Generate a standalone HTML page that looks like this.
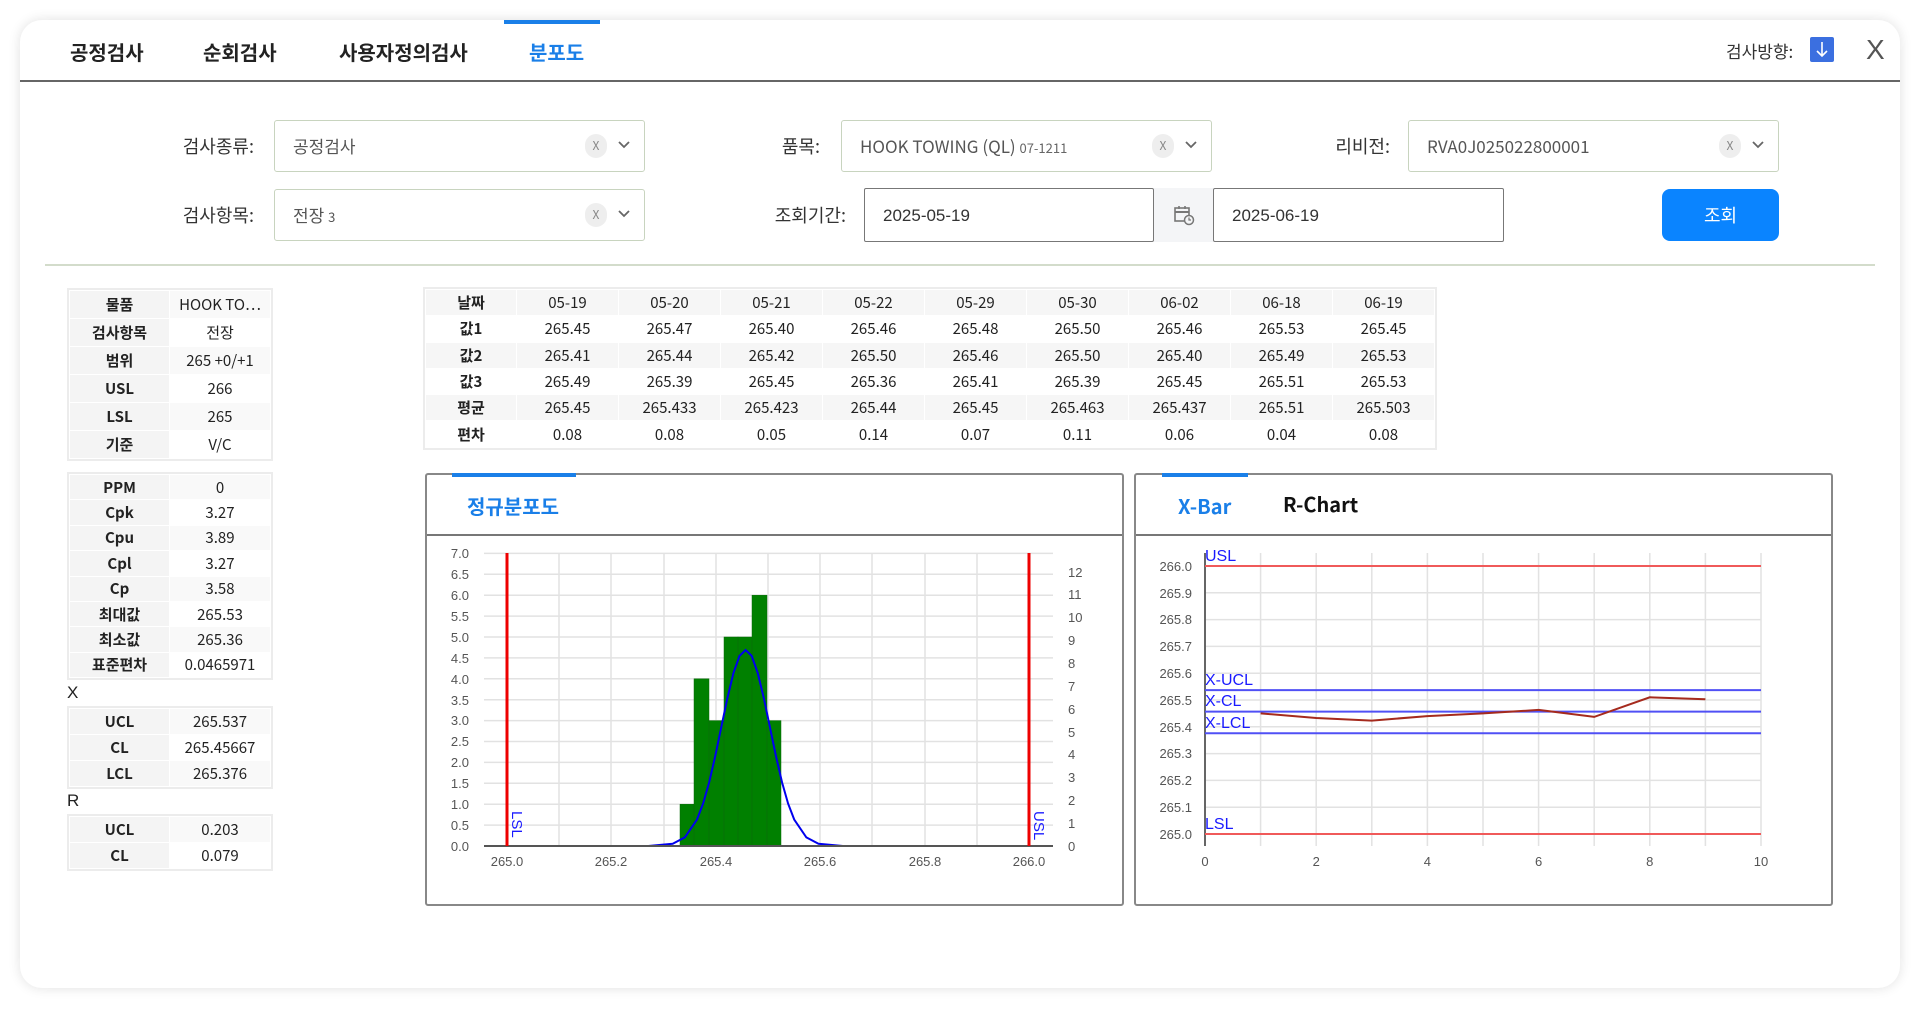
<!DOCTYPE html>
<html><head><meta charset="utf-8">
<style>
*{box-sizing:border-box;margin:0;padding:0}
body{width:1920px;height:1009px;background:#fff;font-family:"Liberation Sans","Noto Sans CJK KR",sans-serif;color:#222;position:relative;overflow:hidden}
.card{position:absolute;left:20px;top:20px;width:1880px;height:968px;background:#fff;border-radius:22px;box-shadow:0 0 12px rgba(0,0,0,.12)}
.abs{position:absolute}
.tab{position:absolute;top:37px;font-size:20px;font-weight:bold;font-family:"Noto Sans CJK KR",sans-serif;color:#222}
.lbl{position:absolute;font-size:18px;font-family:"Noto Sans CJK KR",sans-serif;color:#333;text-align:right}
.sel{position:absolute;height:52px;border:1.5px solid #c8d4bf;border-radius:3px;background:#fff;font-size:17px;color:#555;padding:0 18px;line-height:50px;font-family:"Noto Sans CJK KR",sans-serif}
.sel .x{position:absolute;top:13px;width:22px;height:24px;border-radius:11px;background:#eee;color:#888;font-size:12px;line-height:24px;text-align:center}
.sel svg{position:absolute;left:343px;top:20px}
.inp{position:absolute;height:54px;border:1.5px solid #777;border-radius:2px;background:#fff;font-size:17px;color:#333;padding:0 18px;line-height:54px}
table{border-collapse:collapse;font-size:15px;font-family:"Noto Sans CJK KR",sans-serif}
td{text-align:center;border:1px solid #fff;padding:0}
.lt{position:absolute;left:69px;width:202px;background:#f4f4f4;outline:2px solid #ececec}
.lt td:first-child{font-weight:bold;width:100px;background:#f4f4f4}
.lt tr:nth-child(odd) td:last-child{background:#f9f9f9}
.lt tr:nth-child(even) td:last-child{background:#fff}
.dt{position:absolute;left:425px;top:289px;width:1010px;outline:2px solid #ececec;table-layout:fixed}
.dt td{height:26.3px}
.dt tr:nth-child(odd) td{background:#f6f6f6}
.dt tr:nth-child(even) td{background:#fff}
.dt td:first-child{font-weight:bold;background:#f4f4f4}
.panel{position:absolute;top:473px;height:433px;border:2px solid #888;border-radius:3px;background:#fff}
.panel .hd{position:absolute;left:0;right:0;top:0;height:61px;border-bottom:2px solid #777}
.ind{position:absolute;top:-2px;height:4px;background:#1a7fe8}
</style></head><body>
<div class="card"></div>
<div class="tab" style="left:70px">공정검사</div>
<div class="tab" style="left:203px">순회검사</div>
<div class="tab" style="left:339px">사용자정의검사</div>
<div class="tab" style="left:529px;color:#1a7fe8">분포도</div>
<div class="abs" style="left:504px;top:20px;width:96px;height:4px;background:#1a7fe8"></div>
<div class="abs" style="left:20px;top:80px;width:1880px;height:2px;background:#666"></div>
<div class="abs" style="left:1726px;top:38px;font-size:17px;font-family:'Noto Sans CJK KR',sans-serif;color:#333">검사방향:</div>
<div class="abs" style="left:1810px;top:37px;width:24px;height:25px;background:#3b6fe0;border-radius:2px"><svg width="24" height="25" viewBox="0 0 24 25"><path d="M12 5V19M7 14l5 5 5-5" fill="none" stroke="#fff" stroke-width="1.6"/></svg></div>
<div class="abs" style="left:1866px;top:34px;font-size:28px;color:#555">X</div>
<div class="lbl" style="left:150px;width:104px;top:133px">검사종류:</div>
<div class="sel" style="left:274px;top:120px;width:371px">공정검사<span class="x" style="left:310px">X</span><svg width="12" height="8"><path d="M1 1l5 5 5-5" fill="none" stroke="#666" stroke-width="1.8"/></svg></div>
<div class="lbl" style="left:740px;width:80px;top:133px">품목:</div>
<div class="sel" style="left:841px;top:120px;width:371px">HOOK TOWING (QL) <span style="font-size:13px;color:#666">07-1211</span><span class="x" style="left:310px">X</span><svg width="12" height="8"><path d="M1 1l5 5 5-5" fill="none" stroke="#666" stroke-width="1.8"/></svg></div>
<div class="lbl" style="left:1300px;width:90px;top:133px">리비전:</div>
<div class="sel" style="left:1408px;top:120px;width:371px">RVA0J025022800001<span class="x" style="left:310px">X</span><svg width="12" height="8"><path d="M1 1l5 5 5-5" fill="none" stroke="#666" stroke-width="1.8"/></svg></div>
<div class="lbl" style="left:150px;width:104px;top:202px">검사항목:</div>
<div class="sel" style="left:274px;top:189px;width:371px">전장 <span style="font-size:13px">3</span><span class="x" style="left:310px">X</span><svg width="12" height="8"><path d="M1 1l5 5 5-5" fill="none" stroke="#666" stroke-width="1.8"/></svg></div>
<div class="lbl" style="left:740px;width:106px;top:202px">조회기간:</div>
<div class="inp" style="left:864px;top:188px;width:290px">2025-05-19</div>
<div class="abs" style="left:1154px;top:188px;width:59px;height:54px;background:#f4f5f7;text-align:center;line-height:54px">
<svg width="22" height="22" viewBox="0 0 22 22" style="vertical-align:middle"><rect x="2" y="4" width="14" height="13" fill="none" stroke="#777" stroke-width="1.6"/><line x1="2" y1="8" x2="16" y2="8" stroke="#777" stroke-width="2"/><line x1="6" y1="2" x2="6" y2="5" stroke="#777" stroke-width="1.6"/><line x1="12" y1="2" x2="12" y2="5" stroke="#777" stroke-width="1.6"/><circle cx="16" cy="16" r="4.5" fill="#f4f5f7" stroke="#777" stroke-width="1.5"/><path d="M16 13.5V16h2" fill="none" stroke="#777" stroke-width="1.2"/></svg></div>
<div class="inp" style="left:1213px;top:188px;width:291px">2025-06-19</div>
<div class="abs" style="left:1662px;top:189px;width:117px;height:52px;background:#0a84ff;border-radius:8px;color:#fff;text-align:center;line-height:52px;font-size:18px;font-family:'Noto Sans CJK KR',sans-serif">조회</div>
<div class="abs" style="left:45px;top:264px;width:1830px;height:2px;background:#d3dccb"></div>
<table class="lt" style="top:290px"><tbody>
<tr style="height:28px"><td>물품</td><td>HOOK TO…</td></tr>
<tr style="height:28px"><td>검사항목</td><td>전장</td></tr>
<tr style="height:28px"><td>범위</td><td>265 +0/+1</td></tr>
<tr style="height:28px"><td>USL</td><td>266</td></tr>
<tr style="height:28px"><td>LSL</td><td>265</td></tr>
<tr style="height:28px"><td>기준</td><td>V/C</td></tr>
</tbody></table>
<table class="lt" style="top:474px"><tbody>
<tr style="height:25.4px"><td>PPM</td><td>0</td></tr>
<tr style="height:25.4px"><td>Cpk</td><td>3.27</td></tr>
<tr style="height:25.4px"><td>Cpu</td><td>3.89</td></tr>
<tr style="height:25.4px"><td>Cpl</td><td>3.27</td></tr>
<tr style="height:25.4px"><td>Cp</td><td>3.58</td></tr>
<tr style="height:25.4px"><td>최대값</td><td>265.53</td></tr>
<tr style="height:25.4px"><td>최소값</td><td>265.36</td></tr>
<tr style="height:25.4px"><td>표준편차</td><td>0.0465971</td></tr>
</tbody></table>
<div class="abs" style="left:67px;top:683px;font-size:17px">X</div>
<table class="lt" style="top:708px"><tbody>
<tr style="height:26px"><td>UCL</td><td>265.537</td></tr>
<tr style="height:26px"><td>CL</td><td>265.45667</td></tr>
<tr style="height:26px"><td>LCL</td><td>265.376</td></tr>
</tbody></table>
<div class="abs" style="left:67px;top:791px;font-size:17px">R</div>
<table class="lt" style="top:816px"><tbody>
<tr style="height:26px"><td>UCL</td><td>0.203</td></tr>
<tr style="height:26px"><td>CL</td><td>0.079</td></tr>
</tbody></table>
<table class="dt"><colgroup><col style="width:91px"><col><col><col><col><col><col><col><col><col></colgroup><tbody>
<tr><td>날짜</td><td>05-19</td><td>05-20</td><td>05-21</td><td>05-22</td><td>05-29</td><td>05-30</td><td>06-02</td><td>06-18</td><td>06-19</td></tr>
<tr><td>값1</td><td>265.45</td><td>265.47</td><td>265.40</td><td>265.46</td><td>265.48</td><td>265.50</td><td>265.46</td><td>265.53</td><td>265.45</td></tr>
<tr><td>값2</td><td>265.41</td><td>265.44</td><td>265.42</td><td>265.50</td><td>265.46</td><td>265.50</td><td>265.40</td><td>265.49</td><td>265.53</td></tr>
<tr><td>값3</td><td>265.49</td><td>265.39</td><td>265.45</td><td>265.36</td><td>265.41</td><td>265.39</td><td>265.45</td><td>265.51</td><td>265.53</td></tr>
<tr><td>평균</td><td>265.45</td><td>265.433</td><td>265.423</td><td>265.44</td><td>265.45</td><td>265.463</td><td>265.437</td><td>265.51</td><td>265.503</td></tr>
<tr><td>편차</td><td>0.08</td><td>0.08</td><td>0.05</td><td>0.14</td><td>0.07</td><td>0.11</td><td>0.06</td><td>0.04</td><td>0.08</td></tr>
</tbody></table>
<div class="panel" style="left:425px;width:699px"><div class="hd"></div><div class="ind" style="left:25px;width:124px"></div>
<div class="abs" style="left:40px;top:16px;font-size:20px;font-weight:bold;color:#1a7fe8;font-family:'Noto Sans CJK KR',sans-serif">정규분포도</div></div>
<div class="panel" style="left:1134px;width:699px"><div class="hd"></div><div class="ind" style="left:26px;width:86px"></div>
<div class="abs" style="left:42px;top:16px;font-size:20px;font-weight:bold;color:#1a7fe8;font-family:'Noto Sans CJK KR',sans-serif">X-Bar</div>
<div class="abs" style="left:147px;top:14px;font-size:20px;font-weight:bold;color:#111;font-family:'Noto Sans CJK KR',sans-serif">R-Chart</div></div>

<svg class="abs" style="left:0;top:0" width="1920" height="1009" font-family="Liberation Sans, sans-serif">
<g stroke="#e2e2e2" stroke-width="1.5">
<line x1="484" x2="1053" y1="553.4" y2="553.4"/><line x1="484" x2="1053" y1="574.3" y2="574.3"/><line x1="484" x2="1053" y1="595.2" y2="595.2"/><line x1="484" x2="1053" y1="616.1" y2="616.1"/><line x1="484" x2="1053" y1="637" y2="637"/><line x1="484" x2="1053" y1="657.9" y2="657.9"/><line x1="484" x2="1053" y1="678.8" y2="678.8"/><line x1="484" x2="1053" y1="699.7" y2="699.7"/><line x1="484" x2="1053" y1="720.6" y2="720.6"/><line x1="484" x2="1053" y1="741.5" y2="741.5"/><line x1="484" x2="1053" y1="762.4" y2="762.4"/><line x1="484" x2="1053" y1="783.3" y2="783.3"/><line x1="484" x2="1053" y1="804.2" y2="804.2"/><line x1="484" x2="1053" y1="825.1" y2="825.1"/>
<line x1="559" x2="559" y1="553" y2="846"/><line x1="611" x2="611" y1="553" y2="846"/><line x1="664" x2="664" y1="553" y2="846"/><line x1="716" x2="716" y1="553" y2="846"/><line x1="768" x2="768" y1="553" y2="846"/><line x1="820" x2="820" y1="553" y2="846"/><line x1="872" x2="872" y1="553" y2="846"/><line x1="925" x2="925" y1="553" y2="846"/><line x1="977" x2="977" y1="553" y2="846"/>
</g>
<g fill="#008000" stroke="#0a6a0a" stroke-width="0.5">
<rect x="680" y="804.2" width="14" height="41.8"/><rect x="694" y="678.8" width="15" height="167.2"/><rect x="709" y="720.6" width="15" height="125.4"/><rect x="724" y="637" width="14" height="209"/><rect x="738" y="637" width="14" height="209"/><rect x="752" y="595.2" width="15" height="250.8"/><rect x="767" y="720.6" width="14" height="125.4"/>
</g>
<polyline fill="none" stroke="#0000ee" stroke-width="2" points="643,846 648.4,846 672.7,843.8 684.85,837.4 697,819.5 703.1,803.6 709.15,782.4 715.2,756.3 721.3,727.1 727.4,698.1 733.45,673 739.5,655.9 745.6,650 751.7,655.9 757.75,673 763.8,698.1 769.9,727.1 776,756.3 782.05,782.4 788.1,803.6 794.2,819.5 806.35,837.4 818.5,843.8 842.8,846 846,846"/>
<line x1="484" x2="1053" y1="846" y2="846" stroke="#555" stroke-width="2"/>
<line x1="507" x2="507" y1="553" y2="846" stroke="#ee0000" stroke-width="3"/>
<line x1="1029" x2="1029" y1="553" y2="846" stroke="#ee0000" stroke-width="3"/>
<text transform="translate(512,811) rotate(90)" fill="#1a1aff" font-size="15">LSL</text>
<text transform="translate(1034,811) rotate(90)" fill="#1a1aff" font-size="15">USL</text>
<g fill="#555" font-size="13" text-anchor="end">
<text x="469" y="558">7.0</text><text x="469" y="579">6.5</text><text x="469" y="600">6.0</text><text x="469" y="621">5.5</text><text x="469" y="642">5.0</text><text x="469" y="663">4.5</text><text x="469" y="684">4.0</text><text x="469" y="705">3.5</text><text x="469" y="725">3.0</text><text x="469" y="746">2.5</text><text x="469" y="767">2.0</text><text x="469" y="788">1.5</text><text x="469" y="809">1.0</text><text x="469" y="830">0.5</text><text x="469" y="851">0.0</text>
</g>
<g fill="#555" font-size="13">
<text x="1068" y="577">12</text><text x="1068" y="599">11</text><text x="1068" y="622">10</text><text x="1068" y="645">9</text><text x="1068" y="668">8</text><text x="1068" y="691">7</text><text x="1068" y="714">6</text><text x="1068" y="737">5</text><text x="1068" y="759">4</text><text x="1068" y="782">3</text><text x="1068" y="805">2</text><text x="1068" y="828">1</text><text x="1068" y="851">0</text>
</g>
<g fill="#555" font-size="13" text-anchor="middle">
<text x="507" y="866">265.0</text><text x="611" y="866">265.2</text><text x="716" y="866">265.4</text><text x="820" y="866">265.6</text><text x="925" y="866">265.8</text><text x="1029" y="866">266.0</text>
</g>
<g stroke="#e2e2e2" stroke-width="1.5">
<line x1="1205" x2="1761" y1="592.8" y2="592.8"/><line x1="1205" x2="1761" y1="619.6" y2="619.6"/><line x1="1205" x2="1761" y1="646.4" y2="646.4"/><line x1="1205" x2="1761" y1="673.2" y2="673.2"/><line x1="1205" x2="1761" y1="700" y2="700"/><line x1="1205" x2="1761" y1="726.8" y2="726.8"/><line x1="1205" x2="1761" y1="753.6" y2="753.6"/><line x1="1205" x2="1761" y1="780.4" y2="780.4"/><line x1="1205" x2="1761" y1="807.2" y2="807.2"/>
<line x1="1260.6" x2="1260.6" y1="553" y2="846"/><line x1="1316.2" x2="1316.2" y1="553" y2="846"/><line x1="1371.8" x2="1371.8" y1="553" y2="846"/><line x1="1427.4" x2="1427.4" y1="553" y2="846"/><line x1="1483" x2="1483" y1="553" y2="846"/><line x1="1538.6" x2="1538.6" y1="553" y2="846"/><line x1="1594.2" x2="1594.2" y1="553" y2="846"/><line x1="1649.8" x2="1649.8" y1="553" y2="846"/><line x1="1705.4" x2="1705.4" y1="553" y2="846"/><line x1="1761" x2="1761" y1="553" y2="846"/>
</g>
<line x1="1205" x2="1205" y1="553" y2="846" stroke="#666" stroke-width="2"/>
<line x1="1205" x2="1761" y1="566" y2="566" stroke="#f05a5a" stroke-width="2"/>
<line x1="1205" x2="1761" y1="834" y2="834" stroke="#f05a5a" stroke-width="2"/>
<line x1="1205" x2="1761" y1="690.1" y2="690.1" stroke="#5050f5" stroke-width="2"/>
<line x1="1205" x2="1761" y1="711.6" y2="711.6" stroke="#5050f5" stroke-width="2"/>
<line x1="1205" x2="1761" y1="733.2" y2="733.2" stroke="#5050f5" stroke-width="2"/>
<polyline fill="none" stroke="#a52a1d" stroke-width="2" points="1260.6,713.4 1316.2,718 1371.8,720.6 1427.4,716.1 1483,713.4 1538.6,709.9 1594.2,716.9 1649.8,697.3 1705.4,699.2"/>
<g fill="#1a1aff" font-size="16">
<text x="1205" y="561">USL</text><text x="1205" y="685">X-UCL</text><text x="1205" y="706">X-CL</text><text x="1205" y="728">X-LCL</text><text x="1205" y="829">LSL</text>
</g>
<g fill="#555" font-size="13" text-anchor="end">
<text x="1192" y="571">266.0</text><text x="1192" y="598">265.9</text><text x="1192" y="624">265.8</text><text x="1192" y="651">265.7</text><text x="1192" y="678">265.6</text><text x="1192" y="705">265.5</text><text x="1192" y="732">265.4</text><text x="1192" y="758">265.3</text><text x="1192" y="785">265.2</text><text x="1192" y="812">265.1</text><text x="1192" y="839">265.0</text>
</g>
<g fill="#555" font-size="13" text-anchor="middle">
<text x="1205" y="866">0</text><text x="1316.2" y="866">2</text><text x="1427.4" y="866">4</text><text x="1538.6" y="866">6</text><text x="1649.8" y="866">8</text><text x="1761" y="866">10</text>
</g>
</svg>
</body></html>
